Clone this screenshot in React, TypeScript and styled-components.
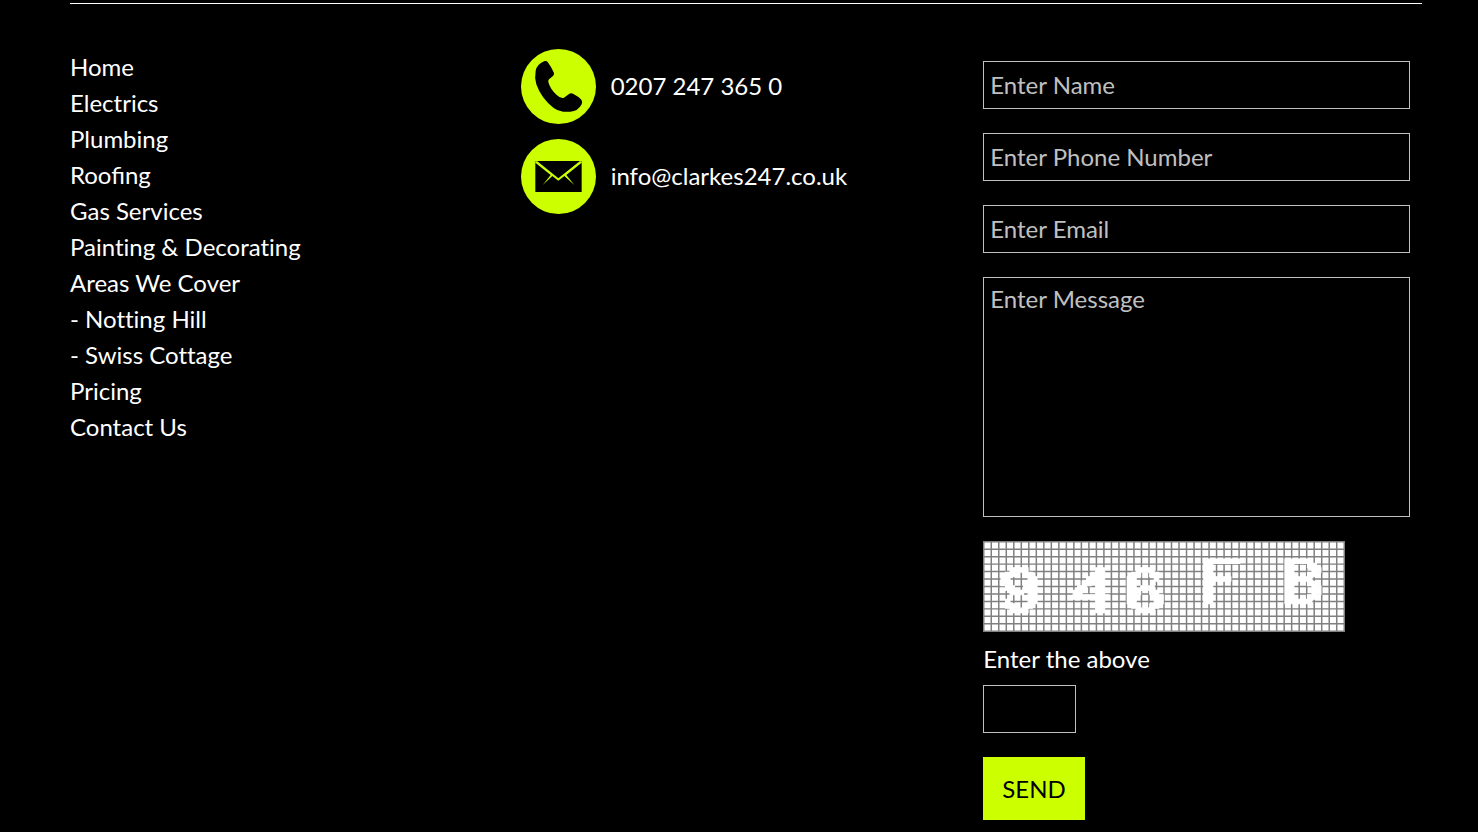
import React from "react";
import styled, { createGlobalStyle } from "styled-components";

const lime = "#cf0";
const line = "#c0c0c0";

const GlobalStyle = createGlobalStyle`
  * {
    box-sizing: border-box;
  }
  body {
    margin: 0;
    background: #000;
    color: #fff;
    font: 24px/36px Lato, sans-serif;
  }
`;

const Footer = styled.footer`
  padding: 3px 56px 12px 70px;
`;

const Columns = styled.div`
  display: grid;
  grid-template-columns: repeat(3, minmax(0, 1fr));
  border-top: 1px solid #fff;
  padding-top: 45px;
`;

const NavList = styled.ul`
  list-style: none;
  margin: 0;
  padding: 0;
`;

const TextLink = styled.a<{ $splitLetters?: boolean }>`
  color: inherit;
  text-decoration: none;
  font-variant-ligatures: ${(p) => (p.$splitLetters ? "none" : "normal")};
`;

const Contacts = styled.address`
  display: flex;
  flex-direction: column;
  gap: 15px;
  font-style: normal;
`;

const ContactRow = styled.div`
  display: flex;
  align-items: center;
  gap: 15px;
`;

const ContactLink = styled(TextLink)`
  padding-bottom: 2px;
`;

const Badge = styled.svg`
  flex: none;
  width: 75px;
  height: 75px;
`;

const Form = styled.form`
  display: flex;
  flex-direction: column;
  align-items: flex-start;
  gap: 24px;
  padding: 12px 12px 0;
`;

const Field = styled.input<{ $short?: boolean }>`
  width: ${(p) => (p.$short ? "93px" : "100%")};
  height: 48px;
  padding: 0 6px 2px;
  border: 1px solid ${line};
  border-radius: 0;
  background: #000;
  color: #fff;
  font: inherit;
  &::placeholder {
    color: ${line};
    opacity: 1;
  }
`;

const Message = styled.textarea`
  display: block;
  width: 100%;
  height: 240px;
  padding: 3px 6px;
  border: 1px solid ${line};
  border-radius: 0;
  background: #000;
  color: #fff;
  font: inherit;
  resize: none;
  &::placeholder {
    color: ${line};
    opacity: 1;
  }
`;

const CaptchaGroup = styled.div`
  display: flex;
  flex-direction: column;
  align-items: flex-start;
`;

const CaptchaArt = styled.svg`
  display: block;
  width: 362px;
  max-width: 100%;
  height: 91px;
`;

const CaptchaLabel = styled.label`
  padding: 9px 0 8px;
`;

const SendButton = styled.button`
  height: 63px;
  padding: 0 19px;
  border: 0;
  background: ${lime};
  color: #000;
  font: inherit;
  cursor: pointer;
`;

const links = [
  "Home",
  "Electrics",
  "Plumbing",
  "Roofing",
  "Gas Services",
  "Painting & Decorating",
  "Areas We Cover",
  "- Notting Hill",
  "- Swiss Cottage",
  "Pricing",
  "Contact Us",
];

const fields = [
  { label: "Enter Name", type: "text", name: "name" },
  { label: "Enter Phone Number", type: "tel", name: "phone" },
  { label: "Enter Email", type: "email", name: "email" },
];

// Bitmap characters of the captcha; each dot covers 3 x 3 units.
const glyphs = [
  {
    x: 12,
    y: 18,
    rows: ["..####..", ".##..##.", "##....##", "##....##", ".##..###", "..###.##", "......##", ".#....##", ".##..##.", "..####.."],
  },
  {
    x: 60,
    y: 18,
    rows: [".....##.", "....###.", "...####.", "..##.##.", ".##..##.", "##...##.", "########", ".....##.", ".....##.", ".....##."],
  },
  {
    x: 96,
    y: 18,
    rows: ["..####..", ".##..##.", "##....#.", "##......", "##.###..", "###..##.", "##....##", "##....##", ".##..##.", "..####.."],
  },
  {
    x: 147,
    y: 12,
    rows: ["########", "##......", "##......", "##......", "######..", "##......", "##......", "##......", "##......", "##......"],
  },
  {
    x: 201,
    y: 12,
    rows: ["######..", "##...##.", "##....##", "##...##.", "######..", "##...##.", "##....##", "##....##", "##...##.", "######.."],
  },
];

const gridPath =
  Array.from({ length: 49 }, (_, i) => `M${i * 5} 0h1v61h-1z`).join("") +
  Array.from({ length: 13 }, (_, i) => `M0 ${i * 5}h241v1h-241z`).join("");

const glyphPath = glyphs
  .map((g) =>
    g.rows
      .map((row, r) =>
        Array.from(row.matchAll(/#+/g))
          .map((run) => {
            const w = run[0].length * 3;
            return `M${g.x + run.index! * 3} ${g.y + r * 3}h${w}v3h-${w}z`;
          })
          .join("")
      )
      .join("")
  )
  .join("");

function Captcha() {
  return (
    <CaptchaArt viewBox="0 0 241 61" preserveAspectRatio="none" role="img" aria-label="Verification code">
      <rect width="241" height="61" fill="#fff" />
      <path d={gridPath} fill="#808080" />
      <path d={glyphPath} fill="#fff" stroke="#fff" strokeWidth="0.7" />
    </CaptchaArt>
  );
}

function PhoneBadge() {
  return (
    <Badge viewBox="0 0 225 225" aria-hidden="true">
      <circle cx="112.5" cy="112.5" r="112.5" fill={lime} />
      <path d="M71 36Q77 35 80 39Q92 55 99 72Q100 77 96 81L84 91Q81 94 82 99Q87 120 108 139Q119 149 127 147Q131 146 135 142L144 135Q149 131 156 134Q172 142 181 152Q186 159 182 166Q171 187 148 188H126Q110 186 98 177Q61 149 46 106Q40 85 44 65Q48 45 71 36Z" fill="#000" />
    </Badge>
  );
}

function MailBadge() {
  return (
    <Badge viewBox="0 0 225 225" aria-hidden="true">
      <circle cx="112.5" cy="112.5" r="112.5" fill={lime} />
      <path d="M43 66H182V159H43Z" fill="#000" />
      <path d="M43 67L49 67L112 118L176 67L182 67V71L136 108L160 138L130 111L112 125L94 111L65 138L89 108L43 71Z" fill={lime} />
    </Badge>
  );
}

export default function App() {
  return (
    <>
      <GlobalStyle />
      <Footer>
        <Columns>
          <nav aria-label="Footer">
            <NavList>
              {links.map((text) => (
                <li key={text}>
                  <TextLink href="#" $splitLetters={/t[ti]/.test(text)}>
                    {text}
                  </TextLink>
                </li>
              ))}
            </NavList>
          </nav>
          <Contacts>
            <ContactRow>
              <PhoneBadge />
              <ContactLink href="tel:02072473650">0207 247 365 0</ContactLink>
            </ContactRow>
            <ContactRow>
              <MailBadge />
              <ContactLink href="mailto:info@clarkes247.co.uk">info@clarkes247.co.uk</ContactLink>
            </ContactRow>
          </Contacts>
          <Form onSubmit={(e) => e.preventDefault()}>
            {fields.map((f) => (
              <Field key={f.name} type={f.type} name={f.name} placeholder={f.label} aria-label={f.label} />
            ))}
            <Message name="message" placeholder="Enter Message" aria-label="Enter Message" />
            <CaptchaGroup>
              <Captcha />
              <CaptchaLabel htmlFor="captcha">Enter the above</CaptchaLabel>
              <Field $short id="captcha" type="text" name="captcha" />
            </CaptchaGroup>
            <SendButton type="submit">SEND</SendButton>
          </Form>
        </Columns>
      </Footer>
    </>
  );
}
